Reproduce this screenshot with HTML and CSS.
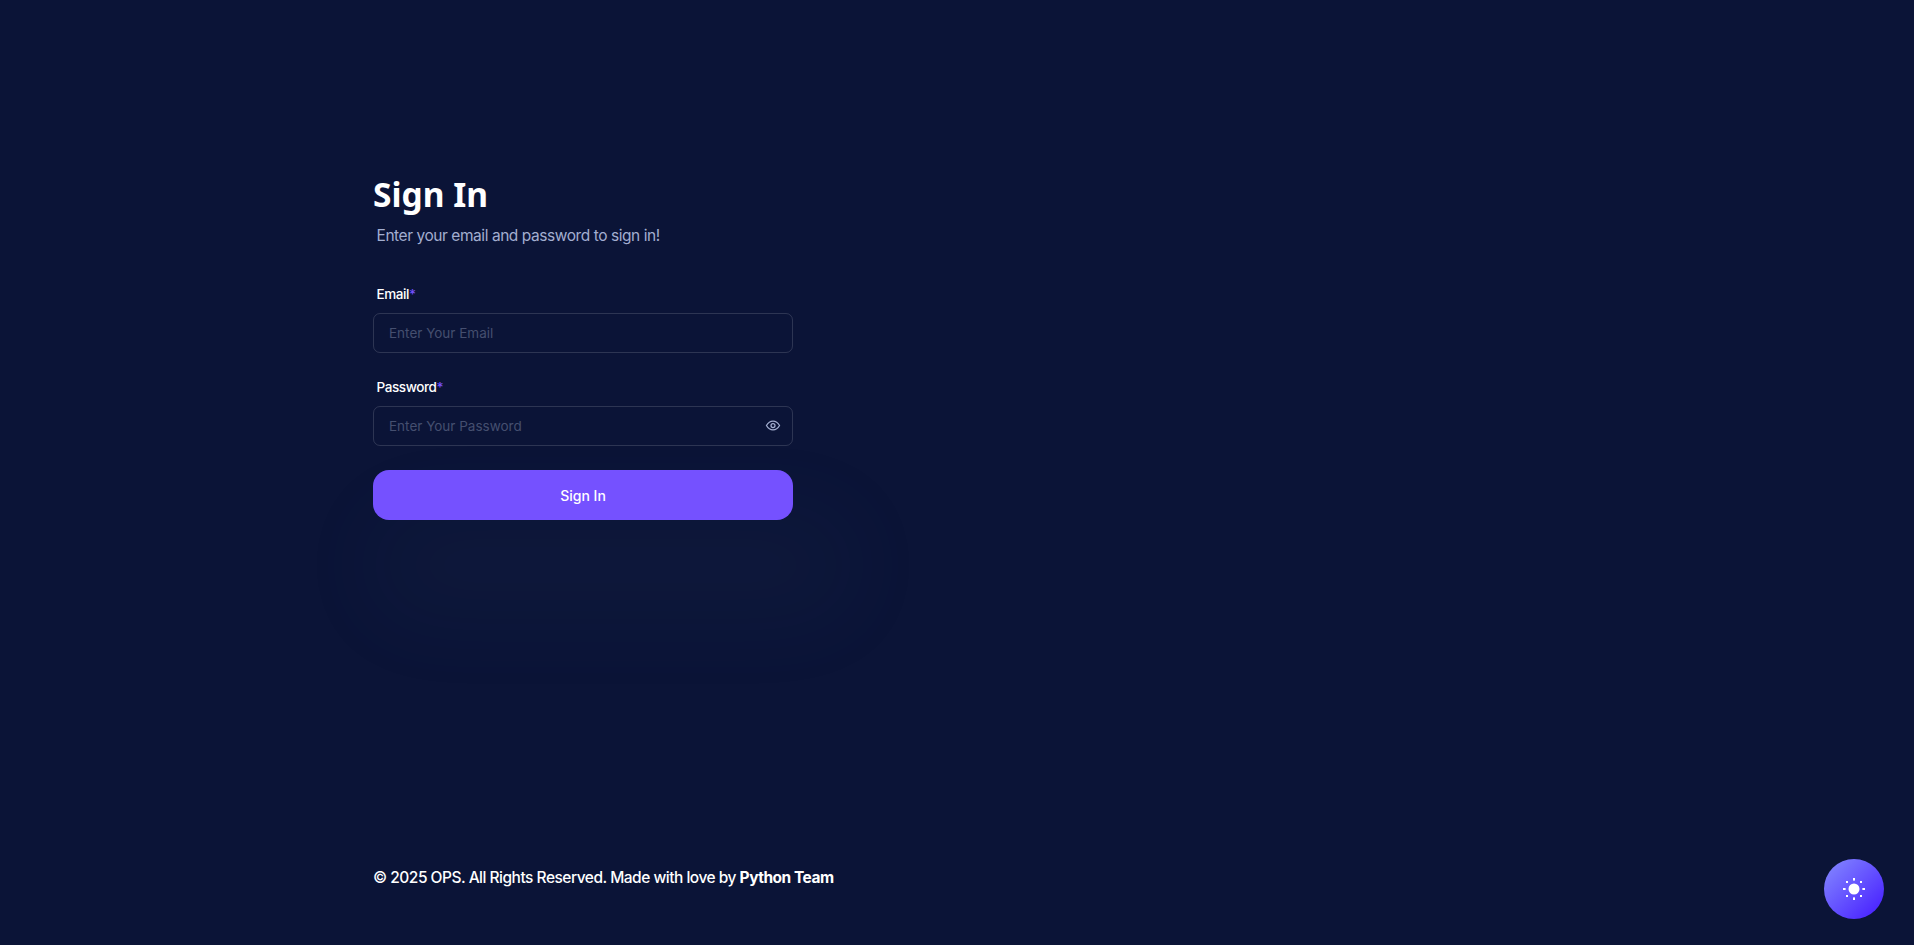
FILE: index.html
```html
<!DOCTYPE html>
<html lang="en">
  <head>
    <meta charset="UTF-8" />
    <meta name="viewport" content="width=device-width, initial-scale=1.0" />
    <title>Sign In</title>
    <link rel="stylesheet" href="styles.css">
  </head>

  <body>
    <div class="page">
      <main class="signin">
        <h1 class="title">Sign In</h1>
        <p class="subtitle">Enter your email and password to sign in!</p>

        <form class="form">
          <label class="label" for="email">Email<span class="star">*</span></label>
          <input class="input" type="text" id="email" placeholder="Enter Your Email" />

          <label class="label label-second" for="password">Password<span class="star">*</span></label>
          <div class="inputBox">
            <input class="input" type="password" id="password" placeholder="Enter Your Password" />
            <svg class="eye" xmlns="http://www.w3.org/2000/svg" viewBox="0 0 24 24" fill="none" stroke="currentColor" stroke-width="2">
              <title>eye</title>
              <path d="M1.5 12S5.5 5 12 5s10.5 7 10.5 7-4 7-10.5 7S1.5 12 1.5 12Z" />
              <circle cx="12" cy="12" r="3.2" />
            </svg>
          </div>

          <button class="submit" type="button">Sign In</button>
        </form>
      </main>

      <footer class="footer">© 2025 OPS. All Rights Reserved. Made with love by <b>Python Team</b></footer>
    </div>

    <button class="themeBtn" type="button" aria-label="Toggle theme">
      <svg width="22" height="22" xmlns="http://www.w3.org/2000/svg" viewBox="0 0 22 22" fill="#fff">
        <title>sun</title>
        <circle cx="11" cy="11" r="5.5" />
        <rect x="10" y="0" width="2" height="2.6" />
        <rect x="10" y="19.4" width="2" height="2.6" />
        <rect x="0" y="10" width="2.6" height="2" />
        <rect x="19.4" y="10" width="2.6" height="2" />
        <rect x="3" y="3" width="2" height="2" />
        <rect x="17" y="3" width="2" height="2" />
        <rect x="3" y="17" width="2" height="2" />
        <rect x="17" y="17" width="2" height="2" />
      </svg>
    </button>
  </body>
</html>
```

FILE: styles.css
```css
* {
  box-sizing: border-box;
}

body {
  margin: 0;
  background-color: #0b1437;
  color: #fff;
  font-family: "Inter", "Liberation Sans", sans-serif;
}

.page {
  display: flex;
  flex-direction: column;
  justify-content: space-between;
  height: 945px;
  padding: 171px 0 0 373px;
  overflow: hidden;
}

.signin {
  width: 420px;
}

.title {
  margin: 0;
  font-family: "Noto Sans", sans-serif;
  font-size: 33.5px;
  font-weight: 700;
  line-height: 46px;
}

.subtitle {
  margin: 7px 0 0 3.5px;
  font-size: 15.5px;
  letter-spacing: -0.44px;
  line-height: 24px;
  color: #a3aed0;
}

.form {
  display: flex;
  flex-direction: column;
  margin-top: 36px;
}

.label {
  margin: 0 0 9px 3.5px;
  font-size: 13.5px;
  font-weight: 500;
  letter-spacing: -0.4px;
  line-height: 20px;
}

.label-second {
  margin-top: 24px;
}

.star {
  color: #7551ff;
}

.input {
  display: block;
  width: 100%;
  height: 40px;
  padding: 0 44px 0 15px;
  background: transparent;
  border: 1px solid rgba(255, 255, 255, 0.14);
  border-radius: 7px;
  color: #fff;
  font-family: inherit;
  font-size: 13.5px;
}

.input::placeholder {
  color: #454f6f;
  opacity: 1;
}

.inputBox {
  position: relative;
}

.eye {
  position: absolute;
  top: 12px;
  right: 12px;
  width: 16px;
  height: 15px;
  color: #a3aed0;
}

.submit {
  height: 50px;
  margin-top: 24px;
  background-color: #7551ff;
  border: none;
  border-radius: 16px;
  color: #fff;
  font-family: inherit;
  font-size: 14px;
  font-weight: 500;
  box-shadow: 30px 70px 90px 40px rgba(112, 144, 176, 0.035);
}

.footer {
  height: 79px;
  font-size: 15.5px;
  font-weight: 500;
  letter-spacing: -0.5px;
  line-height: 24px;
}

.footer b {
  font-weight: 700;
}

.themeBtn {
  position: fixed;
  right: 30px;
  bottom: 26px;
  display: flex;
  align-items: center;
  justify-content: center;
  width: 60px;
  height: 60px;
  padding: 0;
  border: none;
  border-radius: 50%;
  background: linear-gradient(135deg, #868cff 0%, #4318ff 100%);
}
```
